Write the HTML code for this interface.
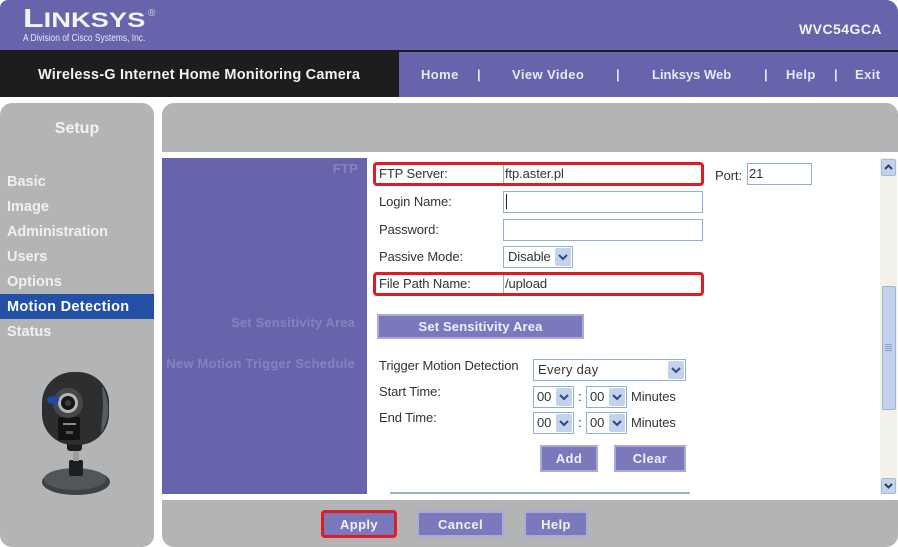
<!DOCTYPE html>
<html><head><meta charset="utf-8"><style>
html,body{margin:0;padding:0}
body{width:898px;height:547px;position:relative;overflow:hidden;background:#fff;font-family:"Liberation Sans",sans-serif;color:#2c2c2c}
div,span{position:absolute;box-sizing:border-box;white-space:nowrap}
.t{font-size:13px;line-height:16px;letter-spacing:-.1px;color:#333}
.nav{font-size:13px;font-weight:bold;line-height:16px;letter-spacing:.4px;color:#e8e8f4;top:67px}
.side{left:7px;font-size:14.5px;font-weight:bold;line-height:18px;letter-spacing:0;color:#f0f0f0}
.lab{font-size:13px;font-weight:bold;line-height:16px;letter-spacing:.25px;color:#8583bf;text-align:right}
.inp{border:1px solid #8fb0d0;background:#fff}
.red{border:3px solid #dd1c26;border-radius:4px}
.btn{display:flex;align-items:center;justify-content:center;background:#7a79bb;border:2px solid #a9aad8;color:#f0f0f8;font-size:13px;font-weight:bold;letter-spacing:.4px}
.sel{border:1px solid #8fb0d0;background:#fff}
.arr{position:absolute;top:1px;bottom:1px;right:1px;width:16px;background:#c5d2ec;border-radius:2px}
svg{position:absolute}
</style></head><body>
<div style="left:0;top:0;width:898px;height:50px;background:#6664ab;border-radius:8px 12px 0 0"></div>
<div style="left:23px;top:5px;font-size:21px;font-weight:bold;color:#f4f4f8;line-height:26px;transform:scaleX(1.3);transform-origin:left"><span style="position:static;font-size:26px">L</span>INKSYS</div>
<div style="left:148px;top:9px;font-size:10px;line-height:10px;color:#d0d0e6">®</div>
<div style="left:23px;top:33px;font-size:10px;line-height:12px;color:#e8e8f2;transform:scaleX(.84);transform-origin:left">A Division of Cisco Systems, Inc.</div>
<div style="left:799px;top:21px;font-size:14px;font-weight:bold;line-height:16px;color:#f2f2f8;letter-spacing:.45px">WVC54GCA</div>

<div style="left:0;top:50px;width:898px;height:2px;background:#1f1c1d"></div>
<div style="left:0;top:50px;width:399px;height:47px;background:#1f1c1d"></div>
<div style="left:399px;top:52px;width:499px;height:45px;background:#6664ab"></div>
<div style="left:38px;top:67px;font-size:14.5px;font-weight:bold;line-height:17px;letter-spacing:.21px;color:#f2f2f2">Wireless-G Internet Home Monitoring Camera</div>
<div class="nav" style="left:421px">Home</div><div class="nav" style="left:477px">|</div>
<div class="nav" style="left:512px">View Video</div><div class="nav" style="left:616px">|</div>
<div class="nav" style="left:652px;letter-spacing:0">Linksys Web</div><div class="nav" style="left:764px">|</div>
<div class="nav" style="left:786px">Help</div><div class="nav" style="left:834px">|</div>
<div class="nav" style="left:855px">Exit</div>

<div style="left:0;top:103px;width:154px;height:444px;background:#b2b4b6;border-radius:12px"></div>
<div style="left:162px;top:103px;width:736px;height:49px;background:#b2b4b6;border-radius:12px 12px 0 0"></div>
<div style="left:162px;top:500px;width:736px;height:47px;background:#b2b4b6;border-radius:0 0 12px 12px"></div>
<div style="left:162px;top:158px;width:205px;height:336px;background:#6664ab"></div>

<div style="left:0;width:154px;top:120px;text-align:center;font-size:16px;font-weight:bold;line-height:18px;color:#f2f2f2">Setup</div>
<div class="side" style="top:173px">Basic</div>
<div class="side" style="top:198px">Image</div>
<div class="side" style="top:223px;letter-spacing:-.1px">Administration</div>
<div class="side" style="top:248px">Users</div>
<div class="side" style="top:273px">Options</div>
<div style="left:0;top:294px;width:154px;height:25px;background:#2150a6"></div>
<div class="side" style="top:298px;color:#fff;letter-spacing:.3px">Motion Detection</div>
<div class="side" style="top:323px">Status</div>

<svg style="left:30px;top:365px" width="100" height="135" viewBox="0 0 100 135">
<ellipse cx="46" cy="117" rx="34" ry="13" fill="#3e4042"/>
<ellipse cx="45" cy="114" rx="31" ry="11" fill="#535658"/>
<rect x="39" y="95" width="14" height="16" rx="2" fill="#1d1e20"/>
<rect x="43" y="86" width="6" height="10" fill="#9a9c9e"/>
<rect x="37" y="76" width="15" height="10" rx="3" fill="#1c1d1f"/>
<rect x="12" y="7" width="67" height="73" rx="31" fill="#2c2e30"/>
<path d="M72 20 Q79 34 78 48 Q77 60 71 68 L73 40Z" fill="#5a5d5f"/>
<rect x="28" y="52" width="22" height="23" rx="2" fill="#131315"/>
<rect x="33" y="58" width="13" height="2" fill="#8a8a8c"/>
<rect x="36" y="66" width="7" height="3" fill="#55565a"/>
<circle cx="38" cy="38" r="15" fill="#454749"/>
<circle cx="38" cy="38" r="10" fill="#b4b6b8"/>
<circle cx="38" cy="38" r="7" fill="#161618"/>
<circle cx="38" cy="38" r="3" fill="#3a3b3e"/>
<ellipse cx="23" cy="35" rx="6" ry="4" fill="#2a46a0"/>
</svg>

<div class="lab" style="left:162px;width:196px;top:161px">FTP</div>
<div class="lab" style="left:162px;width:193px;top:315px;letter-spacing:.15px">Set Sensitivity Area</div>
<div class="lab" style="left:162px;width:193px;top:356px">New Motion Trigger Schedule</div>

<div class="inp" style="left:503px;top:164px;width:200px;height:21px;border:0;border-left:1px solid #8fb0d0"></div>
<div class="red" style="left:373px;top:162px;width:331px;height:24px"></div>
<div class="t" style="left:379px;top:166px">FTP Server:</div>
<div class="t" style="left:505px;top:166px">ftp.aster.pl</div>
<div class="t" style="left:715px;top:168px">Port:</div>
<div class="inp" style="left:747px;top:163px;width:65px;height:22px"></div>
<div class="t" style="left:749px;top:166px">21</div>

<div class="t" style="left:379px;top:194px">Login Name:</div>
<div class="inp" style="left:503px;top:191px;width:200px;height:22px"></div>
<div style="left:506px;top:194px;width:1px;height:15px;background:#222"></div>
<div class="t" style="left:379px;top:222px">Password:</div>
<div class="inp" style="left:503px;top:219px;width:200px;height:22px"></div>
<div class="t" style="left:379px;top:249px">Passive Mode:</div>
<div class="sel" style="left:503px;top:246px;width:70px;height:22px">
<span class="t" style="left:4px;top:2px">Disable</span><span class="arr"><svg width="16" height="18" viewBox="0 0 16 18"><path d="M4 7l4 4 4-4" fill="none" stroke="#2a4a80" stroke-width="2"/></svg></span></div>

<div class="inp" style="left:503px;top:274px;width:200px;height:21px;border:0;border-left:1px solid #8fb0d0"></div>
<div class="red" style="left:373px;top:272px;width:331px;height:24px"></div>
<div class="t" style="left:379px;top:276px">File Path Name:</div>
<div class="t" style="left:505px;top:276px">/upload</div>

<div class="btn" style="left:377px;top:314px;width:207px;height:25px;letter-spacing:.15px">Set Sensitivity Area</div>

<div class="t" style="left:379px;top:358px">Trigger Motion Detection</div>
<div class="sel" style="left:533px;top:359px;width:153px;height:22px">
<span class="t" style="left:4px;top:2px;letter-spacing:.3px">Every day</span><span class="arr"><svg width="16" height="18" viewBox="0 0 16 18"><path d="M4 7l4 4 4-4" fill="none" stroke="#2a4a80" stroke-width="2"/></svg></span></div>
<div class="t" style="left:379px;top:384px">Start Time:</div>
<div class="t" style="left:379px;top:410px">End Time:</div>

<div class="sel" style="left:533px;top:386px;width:41px;height:22px"><span class="t" style="left:3px;top:2px">00</span><span class="arr"><svg width="16" height="18" viewBox="0 0 16 18"><path d="M4 7l4 4 4-4" fill="none" stroke="#2a4a80" stroke-width="2"/></svg></span></div>
<div class="t" style="left:578px;top:389px">:</div>
<div class="sel" style="left:586px;top:386px;width:41px;height:22px"><span class="t" style="left:3px;top:2px">00</span><span class="arr"><svg width="16" height="18" viewBox="0 0 16 18"><path d="M4 7l4 4 4-4" fill="none" stroke="#2a4a80" stroke-width="2"/></svg></span></div>
<div class="t" style="left:631px;top:389px">Minutes</div>

<div class="sel" style="left:533px;top:412px;width:41px;height:22px"><span class="t" style="left:3px;top:2px">00</span><span class="arr"><svg width="16" height="18" viewBox="0 0 16 18"><path d="M4 7l4 4 4-4" fill="none" stroke="#2a4a80" stroke-width="2"/></svg></span></div>
<div class="t" style="left:578px;top:415px">:</div>
<div class="sel" style="left:586px;top:412px;width:41px;height:22px"><span class="t" style="left:3px;top:2px">00</span><span class="arr"><svg width="16" height="18" viewBox="0 0 16 18"><path d="M4 7l4 4 4-4" fill="none" stroke="#2a4a80" stroke-width="2"/></svg></span></div>
<div class="t" style="left:631px;top:415px">Minutes</div>

<div class="btn" style="left:540px;top:445px;width:58px;height:27px">Add</div>
<div class="btn" style="left:614px;top:445px;width:72px;height:27px">Clear</div>
<div style="left:390px;top:492px;width:300px;height:2px;background:#9db4c4"></div>

<div style="left:880px;top:158px;width:17px;height:336px;background:#f2f2ea"></div>
<div style="left:881px;top:159px;width:15px;height:17px;background:#c5d2ec;border:1px solid #a8b8dc;border-radius:2px"><svg style="left:0;top:0" width="13" height="15" viewBox="0 0 13 15"><path d="M3 9l3.500-3.500 3.500 3.500" fill="none" stroke="#2a4060" stroke-width="2"/></svg></div>
<div style="left:882px;top:286px;width:14px;height:124px;background:#c3d1ec;border:1px solid #9fb0d8;border-radius:2px"></div>
<div style="left:885px;top:344px;width:7px;height:7px;background:repeating-linear-gradient(#8fa0c8 0 1px,#c3d1ec 1px 2px)"></div>
<div style="left:881px;top:478px;width:15px;height:16px;background:#c5d2ec;border:1px solid #a8b8dc;border-radius:2px"><svg style="left:0;top:0" width="13" height="14" viewBox="0 0 13 14"><path d="M3 5l3.500 3.500 3.500-3.500" fill="none" stroke="#2a4060" stroke-width="2"/></svg></div>

<div class="btn" style="left:321px;top:510px;width:76px;height:28px;border:3px solid #dd1c26;border-radius:4px">Apply</div>
<div class="btn" style="left:417px;top:511px;width:87px;height:26px">Cancel</div>
<div class="btn" style="left:524px;top:511px;width:64px;height:26px">Help</div>
</body></html>
